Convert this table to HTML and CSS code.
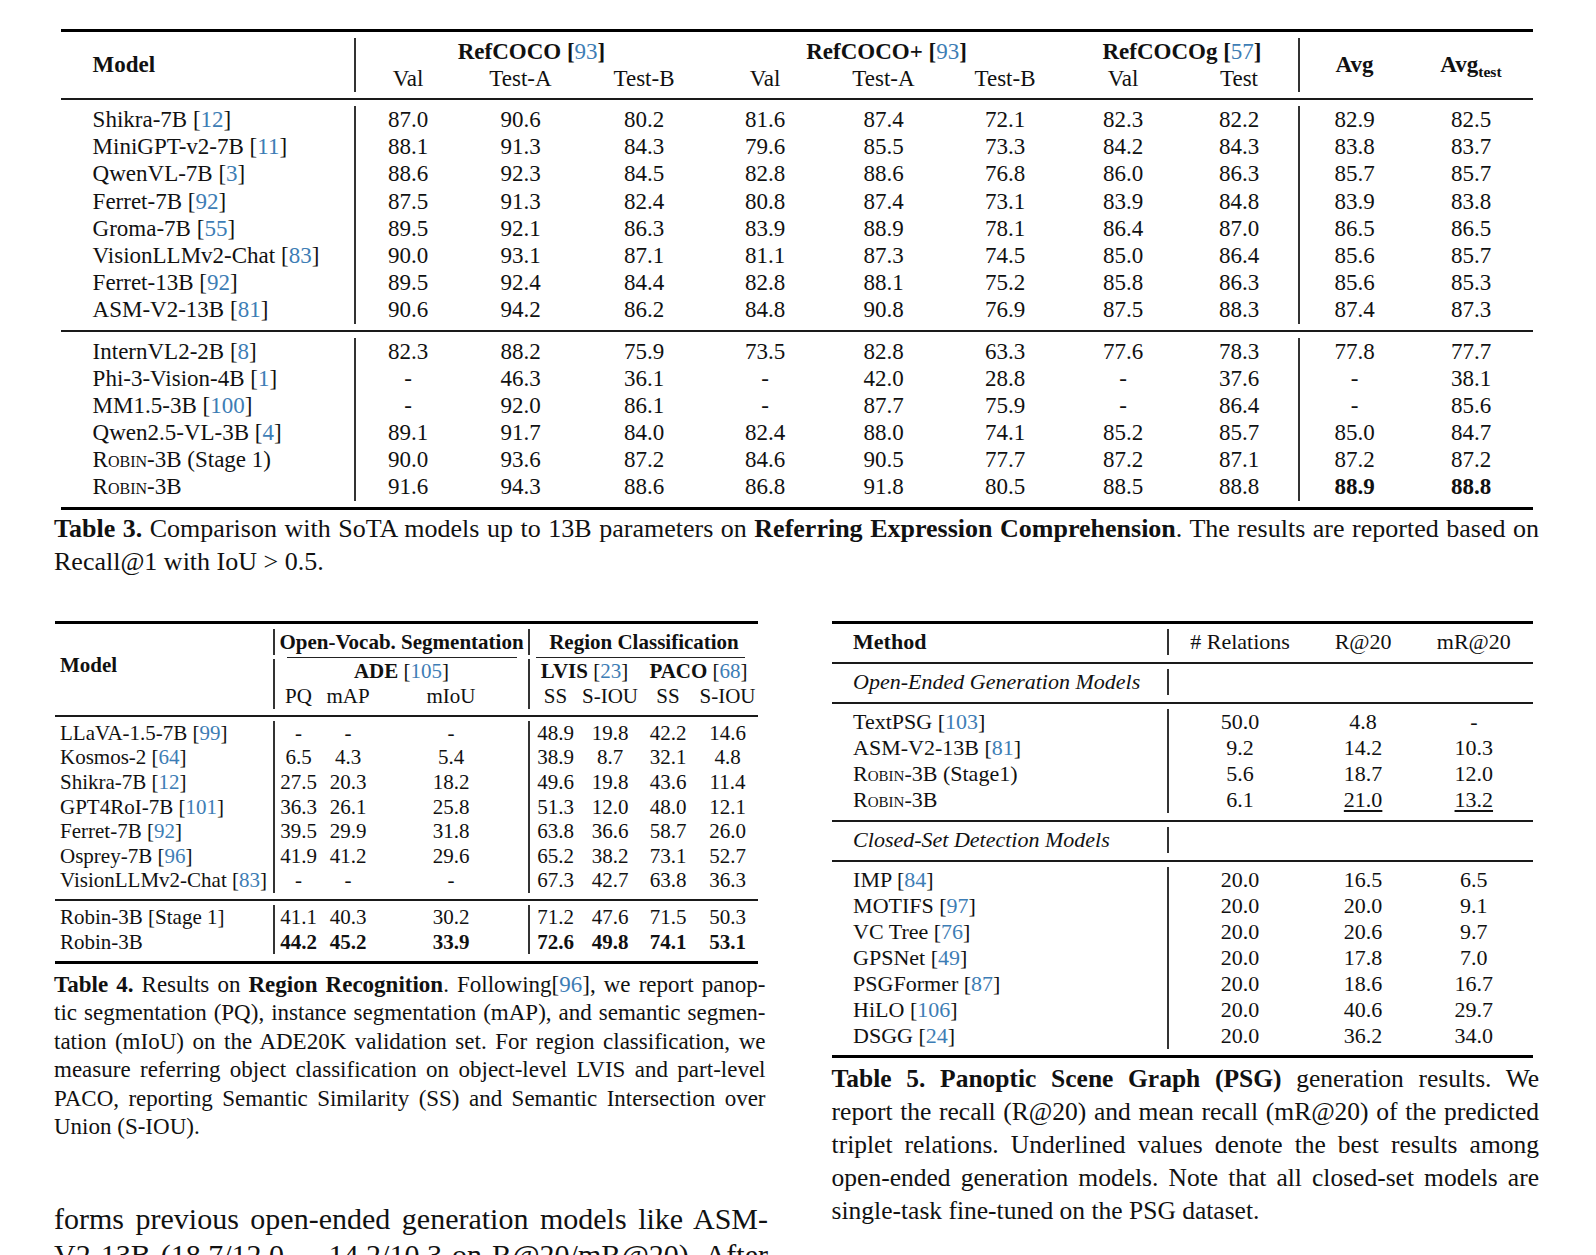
FILE: index.html
```html
<!DOCTYPE html>
<html>
<head>
<meta charset="utf-8">
<link rel="stylesheet" href="styles.css">
</head>
<body>
<div class="page">
  <div class="t3">
    <div class="trule top"></div>
    <div class="h2 lab b">Model</div>
    <div class="h s3 vl b">RefCOCO [<span class="c">93</span>]</div>
    <div class="h s3 b">RefCOCO+ [<span class="c">93</span>]</div>
    <div class="h s2 b">RefCOCOg [<span class="c">57</span>]</div>
    <div class="h2 vl b">Avg</div>
    <div class="h2 b">Avg<sub>test</sub></div>
    <div class="h vl">Val</div><div class="h">Test-A</div><div class="h">Test-B</div>
    <div class="h">Val</div><div class="h">Test-A</div><div class="h">Test-B</div>
    <div class="h">Val</div><div class="h">Test</div>
    <div class="rule"></div>

    <div class="d lab">Shikra-7B [<span class="c">12</span>]</div><div class="d vl">87.0</div><div class="d">90.6</div><div class="d">80.2</div><div class="d">81.6</div><div class="d">87.4</div><div class="d">72.1</div><div class="d">82.3</div><div class="d">82.2</div><div class="d vl">82.9</div><div class="d">82.5</div>
    <div class="d lab">MiniGPT-v2-7B [<span class="c">11</span>]</div><div class="d vl">88.1</div><div class="d">91.3</div><div class="d">84.3</div><div class="d">79.6</div><div class="d">85.5</div><div class="d">73.3</div><div class="d">84.2</div><div class="d">84.3</div><div class="d vl">83.8</div><div class="d">83.7</div>
    <div class="d lab">QwenVL-7B [<span class="c">3</span>]</div><div class="d vl">88.6</div><div class="d">92.3</div><div class="d">84.5</div><div class="d">82.8</div><div class="d">88.6</div><div class="d">76.8</div><div class="d">86.0</div><div class="d">86.3</div><div class="d vl">85.7</div><div class="d">85.7</div>
    <div class="d lab">Ferret-7B [<span class="c">92</span>]</div><div class="d vl">87.5</div><div class="d">91.3</div><div class="d">82.4</div><div class="d">80.8</div><div class="d">87.4</div><div class="d">73.1</div><div class="d">83.9</div><div class="d">84.8</div><div class="d vl">83.9</div><div class="d">83.8</div>
    <div class="d lab">Groma-7B [<span class="c">55</span>]</div><div class="d vl">89.5</div><div class="d">92.1</div><div class="d">86.3</div><div class="d">83.9</div><div class="d">88.9</div><div class="d">78.1</div><div class="d">86.4</div><div class="d">87.0</div><div class="d vl">86.5</div><div class="d">86.5</div>
    <div class="d lab">VisionLLMv2-Chat [<span class="c">83</span>]</div><div class="d vl">90.0</div><div class="d">93.1</div><div class="d">87.1</div><div class="d">81.1</div><div class="d">87.3</div><div class="d">74.5</div><div class="d">85.0</div><div class="d">86.4</div><div class="d vl">85.6</div><div class="d">85.7</div>
    <div class="d lab">Ferret-13B [<span class="c">92</span>]</div><div class="d vl">89.5</div><div class="d">92.4</div><div class="d">84.4</div><div class="d">82.8</div><div class="d">88.1</div><div class="d">75.2</div><div class="d">85.8</div><div class="d">86.3</div><div class="d vl">85.6</div><div class="d">85.3</div>
    <div class="d lab">ASM-V2-13B [<span class="c">81</span>]</div><div class="d vl">90.6</div><div class="d">94.2</div><div class="d">86.2</div><div class="d">84.8</div><div class="d">90.8</div><div class="d">76.9</div><div class="d">87.5</div><div class="d">88.3</div><div class="d vl">87.4</div><div class="d">87.3</div>
    <div class="rule"></div>
    <div class="d lab">InternVL2-2B [<span class="c">8</span>]</div><div class="d vl">82.3</div><div class="d">88.2</div><div class="d">75.9</div><div class="d">73.5</div><div class="d">82.8</div><div class="d">63.3</div><div class="d">77.6</div><div class="d">78.3</div><div class="d vl">77.8</div><div class="d">77.7</div>
    <div class="d lab">Phi-3-Vision-4B [<span class="c">1</span>]</div><div class="d vl">-</div><div class="d">46.3</div><div class="d">36.1</div><div class="d">-</div><div class="d">42.0</div><div class="d">28.8</div><div class="d">-</div><div class="d">37.6</div><div class="d vl">-</div><div class="d">38.1</div>
    <div class="d lab">MM1.5-3B [<span class="c">100</span>]</div><div class="d vl">-</div><div class="d">92.0</div><div class="d">86.1</div><div class="d">-</div><div class="d">87.7</div><div class="d">75.9</div><div class="d">-</div><div class="d">86.4</div><div class="d vl">-</div><div class="d">85.6</div>
    <div class="d lab">Qwen2.5-VL-3B [<span class="c">4</span>]</div><div class="d vl">89.1</div><div class="d">91.7</div><div class="d">84.0</div><div class="d">82.4</div><div class="d">88.0</div><div class="d">74.1</div><div class="d">85.2</div><div class="d">85.7</div><div class="d vl">85.0</div><div class="d">84.7</div>
    <div class="d lab"><span class="sc">Robin</span>-3B (Stage 1)</div><div class="d vl">90.0</div><div class="d">93.6</div><div class="d">87.2</div><div class="d">84.6</div><div class="d">90.5</div><div class="d">77.7</div><div class="d">87.2</div><div class="d">87.1</div><div class="d vl">87.2</div><div class="d">87.2</div>
    <div class="d lab"><span class="sc">Robin</span>-3B</div><div class="d vl">91.6</div><div class="d">94.3</div><div class="d">88.6</div><div class="d">86.8</div><div class="d">91.8</div><div class="d">80.5</div><div class="d">88.5</div><div class="d">88.8</div><div class="d vl b">88.9</div><div class="d b">88.8</div>
    <div class="trule bot"></div>
  </div>

  <div class="cap cap3">
    <div class="j"><b>Table 3.</b> Comparison with SoTA models up to 13B parameters on <b>Referring Expression Comprehension</b>. The results are reported based on</div>
    <div>Recall@1 with IoU &gt; 0.5.</div>
  </div>

  <div class="bottom">
    <div class="left">
      <div class="t4">
        <div class="trule top4"></div>
        <div class="model4 b">Model</div>
        <div class="h1 s3 vl b">Open-Vocab. Segmentation</div>
        <div class="h1 s4 vl b">Region Classification</div>
        <div class="cmid s3"><i class="cm1"></i></div>
        <div class="cmid s4"><i class="cm2"></i></div>
        <div class="hh s3 vl"><b>ADE</b> [<span class="c">105</span>]</div>
        <div class="hh s2 vl"><b>LVIS</b> [<span class="c">23</span>]</div>
        <div class="hh s2"><b>PACO</b> [<span class="c">68</span>]</div>
        <div class="hh vl">PQ</div><div class="hh">mAP</div><div class="hh">mIoU</div>
        <div class="hh vl">SS</div><div class="hh">S-IOU</div><div class="hh">SS</div><div class="hh">S-IOU</div>
        <div class="rule4"></div>

        <div class="d lab">LLaVA-1.5-7B [<span class="c">99</span>]</div><div class="d vl">-</div><div class="d">-</div><div class="d">-</div><div class="d vl">48.9</div><div class="d">19.8</div><div class="d">42.2</div><div class="d">14.6</div>
        <div class="d lab">Kosmos-2 [<span class="c">64</span>]</div><div class="d vl">6.5</div><div class="d">4.3</div><div class="d">5.4</div><div class="d vl">38.9</div><div class="d">8.7</div><div class="d">32.1</div><div class="d">4.8</div>
        <div class="d lab">Shikra-7B [<span class="c">12</span>]</div><div class="d vl">27.5</div><div class="d">20.3</div><div class="d">18.2</div><div class="d vl">49.6</div><div class="d">19.8</div><div class="d">43.6</div><div class="d">11.4</div>
        <div class="d lab">GPT4RoI-7B [<span class="c">101</span>]</div><div class="d vl">36.3</div><div class="d">26.1</div><div class="d">25.8</div><div class="d vl">51.3</div><div class="d">12.0</div><div class="d">48.0</div><div class="d">12.1</div>
        <div class="d lab">Ferret-7B [<span class="c">92</span>]</div><div class="d vl">39.5</div><div class="d">29.9</div><div class="d">31.8</div><div class="d vl">63.8</div><div class="d">36.6</div><div class="d">58.7</div><div class="d">26.0</div>
        <div class="d lab">Osprey-7B [<span class="c">96</span>]</div><div class="d vl">41.9</div><div class="d">41.2</div><div class="d">29.6</div><div class="d vl">65.2</div><div class="d">38.2</div><div class="d">73.1</div><div class="d">52.7</div>
        <div class="d lab">VisionLLMv2-Chat [<span class="c">83</span>]</div><div class="d vl">-</div><div class="d">-</div><div class="d">-</div><div class="d vl">67.3</div><div class="d">42.7</div><div class="d">63.8</div><div class="d">36.3</div>
        <div class="rule4"></div>
        <div class="d lab">Robin-3B [Stage 1]</div><div class="d vl">41.1</div><div class="d">40.3</div><div class="d">30.2</div><div class="d vl">71.2</div><div class="d">47.6</div><div class="d">71.5</div><div class="d">50.3</div>
        <div class="d lab">Robin-3B</div><div class="d vl b">44.2</div><div class="d b">45.2</div><div class="d b">33.9</div><div class="d vl b">72.6</div><div class="d b">49.8</div><div class="d b">74.1</div><div class="d b">53.1</div>
        <div class="trule bot4"></div>
      </div>
      <div class="cap cap4">
        <div class="j"><b>Table 4.</b> Results on <b>Region Recognition</b>. Following[<span class="c">96</span>], we report panop-</div>
        <div class="j">tic segmentation (PQ), instance segmentation (mAP), and semantic segmen-</div>
        <div class="j">tation (mIoU) on the ADE20K validation set. For region classification, we</div>
        <div class="j">measure referring object classification on object-level LVIS and part-level</div>
        <div class="j">PACO, reporting Semantic Similarity (SS) and Semantic Intersection over</div>
        <div>Union (S-IOU).</div>
      </div>
      <div class="bodytext">
        <div class="j">forms previous open-ended generation models like ASM-</div>
        <div class="j">V2-13B (18.7/12.0 <span class="vs">vs.</span> 14.2/10.3 on R@20/mR@20). After</div>
      </div>
    </div>

    <div class="right">
      <div class="t5">
        <div class="trule top5"></div>
        <div class="hd lab b">Method</div><div class="hd vl"># Relations</div><div class="hd">R@20</div><div class="hd">mR@20</div>
        <div class="rule5"></div>
        <div class="hd lab it">Open-Ended Generation Models</div><div class="hd vl"></div><div class="hd"></div><div class="hd"></div>
        <div class="rule5"></div>
        <div class="d lab">TextPSG [<span class="c">103</span>]</div><div class="d vl">50.0</div><div class="d">4.8</div><div class="d">-</div>
        <div class="d lab">ASM-V2-13B [<span class="c">81</span>]</div><div class="d vl">9.2</div><div class="d">14.2</div><div class="d">10.3</div>
        <div class="d lab"><span class="sc">Robin</span>-3B (Stage1)</div><div class="d vl">5.6</div><div class="d">18.7</div><div class="d">12.0</div>
        <div class="d lab"><span class="sc">Robin</span>-3B</div><div class="d vl">6.1</div><div class="d"><u>21.0</u></div><div class="d"><u>13.2</u></div>
        <div class="rule5"></div>
        <div class="hd lab it">Closed-Set Detection Models</div><div class="hd vl"></div><div class="hd"></div><div class="hd"></div>
        <div class="rule5"></div>
        <div class="d lab">IMP [<span class="c">84</span>]</div><div class="d vl">20.0</div><div class="d">16.5</div><div class="d">6.5</div>
        <div class="d lab">MOTIFS [<span class="c">97</span>]</div><div class="d vl">20.0</div><div class="d">20.0</div><div class="d">9.1</div>
        <div class="d lab">VC Tree [<span class="c">76</span>]</div><div class="d vl">20.0</div><div class="d">20.6</div><div class="d">9.7</div>
        <div class="d lab">GPSNet [<span class="c">49</span>]</div><div class="d vl">20.0</div><div class="d">17.8</div><div class="d">7.0</div>
        <div class="d lab">PSGFormer [<span class="c">87</span>]</div><div class="d vl">20.0</div><div class="d">18.6</div><div class="d">16.7</div>
        <div class="d lab">HiLO [<span class="c">106</span>]</div><div class="d vl">20.0</div><div class="d">40.6</div><div class="d">29.7</div>
        <div class="d lab">DSGG [<span class="c">24</span>]</div><div class="d vl">20.0</div><div class="d">36.2</div><div class="d">34.0</div>
        <div class="trule bot5"></div>
      </div>
      <div class="cap cap5">
        <div class="j"><b>Table 5.</b> <b>Panoptic Scene Graph (PSG)</b> generation results. We</div>
        <div class="j">report the recall (R@20) and mean recall (mR@20) of the predicted</div>
        <div class="j">triplet relations. Underlined values denote the best results among</div>
        <div class="j">open-ended generation models. Note that all closed-set models are</div>
        <div>single-task fine-tuned on the PSG dataset.</div>
      </div>
    </div>
  </div>
</div>
</body>
</html>
```

FILE: styles.css
```css
* { box-sizing: border-box; margin: 0; padding: 0; }
html, body { width: 1596px; height: 1255px; overflow: hidden; background: #fff; }
body { font-family: "Liberation Serif", "Times New Roman", serif; color: #111; }
.page { padding-top: 29px; }
b, .b { font-weight: bold; }
.c { color: #3d7db5; font-weight: normal; }
.sc { font-variant: small-caps; }
sub { font-size: 0.68em; vertical-align: -0.32em; line-height: 0; }
.vl { border-left: 2px solid #333; }
.s2 { grid-column: span 2; }
.s3 { grid-column: span 3; }
.s4 { grid-column: span 4; }
.lab { text-align: left !important; }
.trule { grid-column: 1 / -1; height: 3px; background: #000; }
.j { text-align: justify; text-align-last: justify; }

/* Table 3 */
.t3 {
  margin-left: 61px; width: 1472px; display: grid;
  grid-template-columns: 293px 106px 121px 126px 116px 121px 122px 114px 118px 111px 124px;
  font-size: 23px; white-space: nowrap;
}
.t3 .top { margin-bottom: 6px; }
.t3 .bot { margin-top: 6.7px; }
.t3 .h { height: 27px; line-height: 27px; text-align: center; }
.t3 .h2 { grid-row: span 2; height: 54px; line-height: 54px; text-align: center; }
.t3 .d { height: 27.2px; line-height: 27.2px; text-align: center; }
.t3 .lab { padding-left: 31.6px; }
.t3 .rule { grid-column: 1 / -1; height: 2px; margin: 6px 0; background: #1a1a1a; }

.cap3 { margin: 3px 0 0 54px; width: 1485px; font-size: 26px; line-height: 32.8px; }

/* bottom */
.bottom { display: flex; align-items: flex-start; margin-top: 42.4px; padding-left: 54px; gap: 63.6px; }
.left { width: 714px; }
.right { width: 708px; }

/* Table 4 */
.t4 {
  margin-left: 1px; width: 703px; display: grid;
  grid-template-columns: 218px 49px 52px 154px 53px 58px 58px 61px;
  font-size: 21px; white-space: nowrap;
}
.t4 .top4 { margin-bottom: 4.5px; }
.t4 .bot4 { margin-top: 6.6px; }
.t4 .model4 { grid-row: span 4; display: flex; align-items: center; padding: 0 0 6px 5px; }
.t4 .h1 { height: 26px; line-height: 26px; text-align: center; }
.t4 .cmid { height: 4px; padding-top: 2px; }
.t4 .cmid i { display: block; height: 1.3px; background: #222; }
.t4 .cm1 { margin: 0 11px 0 14px; }
.t4 .cm2 { margin: 0 13px 0 8px; }
.t4 .hh { height: 25px; line-height: 25px; text-align: center; }
.t4 .d { height: 24.6px; line-height: 24.6px; text-align: center; }
.t4 .lab { padding-left: 5px; }
.t4 .rule4 { grid-column: 1 / -1; height: 2px; margin: 6px 0 4px; background: #1a1a1a; }

.cap4 { margin-top: 7.3px; width: 711.5px; font-size: 23px; line-height: 28.4px; }
.bodytext { margin-top: 60px; width: 714px; font-size: 30px; line-height: 36px; }
.vs { font-size: 0.72em; }

/* Table 5 */
.t5 {
  width: 701.4px; display: grid;
  grid-template-columns: 335px 145px 103px 118.4px;
  font-size: 22px; white-space: nowrap;
}
.t5 .top5 { margin-bottom: 5px; }
.t5 .bot5 { margin-top: 6.5px; }
.t5 .hd { height: 25.8px; line-height: 25.8px; text-align: center; }
.t5 .d { height: 26px; line-height: 26px; text-align: center; }
.t5 .lab { padding-left: 21.5px; }
.t5 .it { font-style: italic; }
.t5 .rule5 { grid-column: 1 / -1; height: 2px; margin: 7px 0 5px; background: #1a1a1a; }
.t5 u { text-decoration-thickness: 1.5px; text-underline-offset: 3px; }

.cap5 { margin-top: 3.5px; width: 707.4px; font-size: 25.5px; line-height: 33px; }
```
